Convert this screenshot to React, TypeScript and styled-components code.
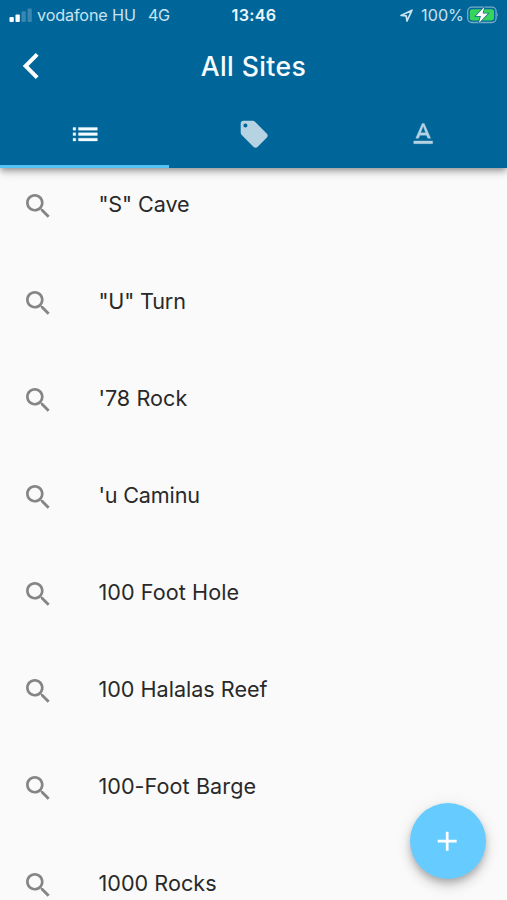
import React from "react";
import styled, { createGlobalStyle } from "styled-components";

const GlobalStyle = createGlobalStyle`
  body { margin: 0; background: #fafafa; font-family: Inter, "Liberation Sans", sans-serif; }
  * { box-sizing: border-box; }
`;

const Screen = styled.div`
  position: relative;
  display: flex;
  flex-direction: column;
  width: 507px;
  height: 900px;
  overflow: hidden;
  background: #fafafa;
`;

const Header = styled.header`
  flex: none;
  height: 168px;
  display: flex;
  flex-direction: column;
  background: #006699;
  box-shadow: 0 3px 5px -1px rgba(0, 0, 0, 0.25), 0 5px 7px rgba(0, 0, 0, 0.14), 0 1px 13px rgba(0, 0, 0, 0.1);
  z-index: 1;
`;

const StatusBar = styled.div`
  display: grid;
  grid-template-columns: 1fr auto 1fr;
  align-items: center;
  height: 30px;
  padding: 0 8px 0 9px;
  color: #c9e2f0;
  font-size: 16.2px;
  line-height: 30px;
`;

const StatusGroup = styled.div<{ $end?: boolean }>`
  display: flex;
  align-items: center;
  white-space: pre;
  justify-content: ${(p) => (p.$end ? "flex-end" : "flex-start")};
`;

const Carrier = styled.span`
  margin-left: 5px;
  letter-spacing: -0.13px;
`;

const Network = styled.span`
  margin-left: 12px;
  letter-spacing: -0.3px;
`;

const Clock = styled.span`
  color: #e9f5fb;
  font-weight: 600;
  letter-spacing: 0.3px;
`;

const Charge = styled.span`
  margin: 0 3px 0 8px;
`;

const TitleBar = styled.div`
  display: grid;
  grid-template-columns: 61px 1fr 61px;
  align-items: center;
  height: 72px;
`;

const BackButton = styled.button`
  display: flex;
  justify-content: center;
  padding: 0;
  border: 0;
  background: none;
`;

const Title = styled.h1`
  margin: 0;
  text-align: center;
  color: #f7fcff;
  font-size: 26.6px;
  line-height: 32px;
  font-weight: 500;
  letter-spacing: 0.4px;
`;

const Tabs = styled.nav`
  display: grid;
  grid-template-columns: repeat(3, 1fr);
  height: 66px;
`;

const Tab = styled.button<{ $active?: boolean }>`
  display: flex;
  align-items: center;
  justify-content: center;
  padding: 1px 0 0 1px;
  border: 0;
  border-bottom: 3px solid ${(p) => (p.$active ? "#55c3f5" : "transparent")};
  background: none;
  color: ${(p) => (p.$active ? "#f4fbff" : "#b5d3e2")};
`;

const Icon = styled.svg<{ $weight?: number }>`
  display: block;
  width: 32.4px;
  height: 32.4px;
  fill: currentColor;
  stroke: currentColor;
  stroke-width: ${(p) => p.$weight ?? 0};
`;

const List = styled.ul`
  margin: 0;
  padding: 0;
  list-style: none;
`;

const Row = styled.li`
  display: flex;
  align-items: flex-start;
  height: 97.1px;
  padding: 21.5px 22px 0 22.4px;
  color: #858585;
`;

const SiteName = styled.span<{ $tracking: number }>`
  margin-left: 43.6px;
  color: #292929;
  font-size: 21.6px;
  line-height: 28px;
  letter-spacing: ${(p) => p.$tracking}px;
  white-space: nowrap;
`;

const AddButton = styled.button`
  position: absolute;
  right: 21.5px;
  bottom: 21px;
  display: flex;
  align-items: center;
  justify-content: center;
  width: 76px;
  height: 76px;
  padding: 0;
  border: 0;
  border-radius: 50%;
  background: #66ccff;
  color: #fff;
  box-shadow: 0 4px 7px -1px rgba(0, 0, 0, 0.22), 0 8px 13px rgba(0, 0, 0, 0.12), 0 1px 18px rgba(0, 0, 0, 0.07);
`;

const sites = [
  { name: '"S" Cave', tracking: -0.1 },
  { name: '"U" Turn', tracking: -0.15 },
  { name: "'78 Rock", tracking: 0.05 },
  { name: "'u Caminu", tracking: -0.15 },
  { name: "100 Foot Hole", tracking: 0.07 },
  { name: "100 Halalas Reef", tracking: 0 },
  { name: "100-Foot Barge", tracking: 0.07 },
  { name: "1000 Rocks", tracking: 0.05 },
];

const tabs = [
  {
    d: "M3 13h2v-2H3v2zm0 4h2v-2H3v2zm0-8h2V7H3v2zm4 4h14v-2H7v2zm0 4h14v-2H7v2zM7 7v2h14V7H7z",
    weight: 0.25,
  },
  {
    d: "M21.41 11.58l-9-9C12.05 2.22 11.55 2 11 2H4c-1.1 0-2 .9-2 2v7c0 .55.22 1.05.59 1.42l9 9c.36.36.86.58 1.41.58.55 0 1.05-.22 1.41-.59l7-7c.37-.36.59-.86.59-1.41 0-.55-.23-1.06-.59-1.42zM5.5 7C4.67 7 4 6.33 4 5.5S4.67 4 5.5 4 7 4.67 7 5.5 6.33 7 5.5 7z",
    weight: 0,
  },
  {
    d: "M5 17v2h14v-2H5zm4.5-4.2h5l.9 2.2h2.1L12.75 4h-1.5L6.5 15h2.1l.9-2.2zM12 5.98L13.87 11h-3.74L12 5.98z",
    weight: 0.25,
  },
];

const SEARCH =
  "M15.5 14h-.79l-.28-.27C15.41 12.59 16 11.11 16 9.5 16 5.91 13.09 3 9.5 3S3 5.91 3 9.5 5.91 16 9.5 16c1.61 0 3.09-.59 4.23-1.57l.27.28v.79l5 4.99L20.49 19l-4.99-5zm-6 0C7.01 14 5 11.99 5 9.5S7.01 5 9.5 5 14 7.01 14 9.5 11.99 14 9.5 14z";

const Signal = () => (
  <svg width="23" height="14" viewBox="0 0 23 14">
    <rect x="0.5" y="9" width="4.3" height="5" rx="1" fill="#fff" />
    <rect x="6.5" y="6.5" width="4.3" height="7.5" rx="1" fill="#fff" />
    <rect x="12.5" y="3.2" width="4.3" height="10.8" rx="1" fill="#3987b0" />
    <rect x="18.5" y="0.5" width="4.3" height="13.5" rx="1" fill="#3987b0" />
  </svg>
);

const Location = () => (
  <svg width="13" height="13" viewBox="0 0 13 13" fill="none" stroke="#c9e2f0" strokeWidth="1.7" strokeLinejoin="round">
    <path d="M1 6.5 12 1.2 7 12 6.2 6.9Z" />
  </svg>
);

const Battery = () => (
  <svg width="32" height="18" viewBox="0 0 32 18">
    <rect x="0.7" y="1.2" width="28.4" height="15.3" rx="4.2" fill="none" stroke="#76abc7" strokeWidth="1.3" />
    <path d="M30.2 6.5q1.6 2.3 0 4.6Z" fill="#76abc7" />
    <rect x="2.8" y="3.3" width="24.2" height="11.1" rx="2.3" fill="#37d45b" />
    <path d="M17.3 1 8.8 10h5.1l-2 7 9-9.5h-5.3Z" fill="#fff" stroke="#17688c" strokeWidth="1.4" paintOrder="stroke" />
  </svg>
);

export default function App() {
  return (
    <Screen>
      <GlobalStyle />
      <Header>
        <StatusBar>
          <StatusGroup>
            <Signal />
            <Carrier>vodafone HU</Carrier>
            <Network>4G</Network>
          </StatusGroup>
          <Clock>13:46</Clock>
          <StatusGroup $end>
            <Location />
            <Charge>100%</Charge>
            <Battery />
          </StatusGroup>
        </StatusBar>
        <TitleBar>
          <BackButton aria-label="Back">
            <svg width="18" height="28" viewBox="0 0 18 28" fill="none" stroke="#fff" strokeWidth="4">
              <path d="M15.2 2.3 3.6 14l11.6 11.7" />
            </svg>
          </BackButton>
          <Title>All Sites</Title>
        </TitleBar>
        <Tabs>
          {tabs.map(({ d, weight }, i) => (
            <Tab key={d} $active={i === 0}>
              <Icon viewBox="0 0 24 24" $weight={weight}>
                <path d={d} />
              </Icon>
            </Tab>
          ))}
        </Tabs>
      </Header>
      <List>
        {sites.map(({ name, tracking }) => (
          <Row key={name}>
            <Icon viewBox="0 0 24 24">
              <path d={SEARCH} />
            </Icon>
            <SiteName $tracking={tracking}>{name}</SiteName>
          </Row>
        ))}
      </List>
      <AddButton aria-label="Add site">
        <Icon viewBox="0 0 24 24">
          <path d="M19 13h-6v6h-2v-6H5v-2h6V5h2v6h6v2z" />
        </Icon>
      </AddButton>
    </Screen>
  );
}
